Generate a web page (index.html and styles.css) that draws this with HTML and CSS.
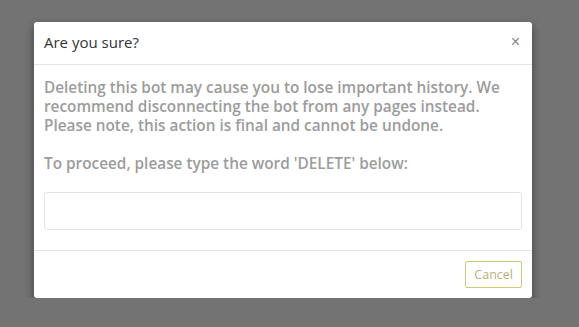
FILE: index.html
```html
<!DOCTYPE html>
<html lang="en">
<head>
  <meta charset="UTF-8">
  <title>Delete bot</title>
  <link rel="stylesheet" href="styles.css">
</head>
<body>
  <div class="backdrop">
    <div class="modal">
      <div class="modal-header">
        <h4 class="modal-title">Are you sure?</h4>
        <button class="close">&times;</button>
      </div>
      <div class="modal-body">
        <p>Deleting this bot may cause you to lose important history. We recommend disconnecting the bot from any pages instead. Please note, this action is final and cannot be undone.</p>
        <p>To proceed, please type the word 'DELETE' below:</p>
        <input type="text" class="confirm-input">
      </div>
      <div class="modal-footer">
        <button class="cancel">Cancel</button>
      </div>
    </div>
  </div>
</body>
</html>
```

FILE: styles.css
```css
body {
  margin: 0;
  background: #737373;
  font-family: 'Open Sans', 'Segoe UI', Arial, sans-serif;
}
.backdrop {
  padding: 22px 0 0 34px;
}
.modal {
  width: 498px;
  background: #fff;
  border-radius: 3px;
  box-shadow: 0 4px 10px rgba(0, 0, 0, 0.45);
}
.modal-header {
  display: flex;
  justify-content: space-between;
  align-items: center;
  box-sizing: border-box;
  height: 43px;
  padding: 0 10px 3px;
  border-bottom: 1px solid #e5e5e5;
}
.modal-title {
  margin: 0;
  font-size: 15px;
  font-weight: 400;
  color: #333;
}
.close {
  background: none;
  border: none;
  color: #888;
  font-size: 16px;
  padding: 0 2px;
  cursor: pointer;
}
.modal-body {
  padding: 13px 10px 20px;
  border-bottom: 1px solid #e5e5e5;
}
.modal-body p {
  margin: 0 0 19px 0;
  font-size: 15.35px;
  line-height: 19px;
  font-weight: 600;
  color: #9c9c9c;
}
.confirm-input {
  display: block;
  box-sizing: border-box;
  width: 100%;
  height: 38px;
  border: 1px solid #e3e3e3;
  border-radius: 3px;
  margin-top: 11px;
}
.modal-footer {
  display: flex;
  justify-content: flex-end;
  padding: 10px;
}
.cancel {
  background: #fff;
  border: 1px solid #cfc77a;
  border-radius: 2px;
  color: #b9b27a;
  font-family: inherit;
  font-size: 12.5px;
  padding: 4px 8px;
  height: 27px;
  cursor: pointer;
}
```
